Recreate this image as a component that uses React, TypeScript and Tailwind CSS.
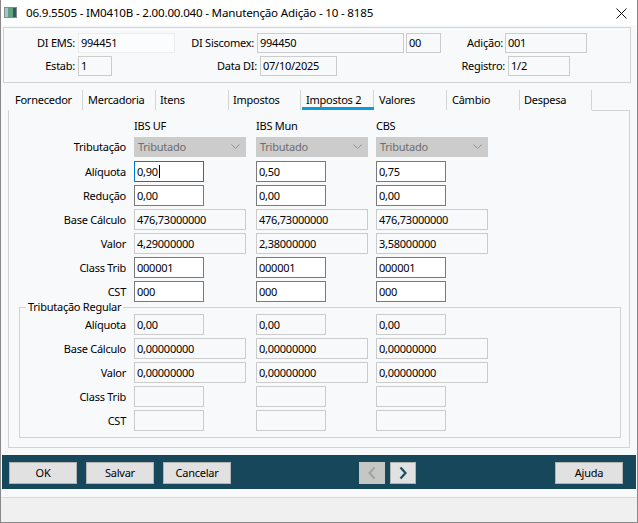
import React from 'react';

type Kind = 'edit' | 'focus' | 'ro';

const TABS = [
  { label: 'Fornecedor', w: 'w-[74px]', pl: 'pl-[6px]' },
  { label: 'Mercadoria', w: 'w-[73px]', pl: 'pl-[5px]' },
  { label: 'Itens', w: 'w-[73px]', pl: 'pl-[4px]' },
  { label: 'Impostos', w: 'w-[72px]', pl: 'pl-[4px]' },
  { label: 'Impostos 2', w: 'w-[73px]', pl: 'pl-[5px]', active: true },
  { label: 'Valores', w: 'w-[73px]', pl: 'pl-[5px]' },
  { label: 'Câmbio', w: 'w-[73px]', pl: 'pl-[5px]' },
  { label: 'Despesa', w: 'w-[72px]', pl: 'pl-[4px]' },
];

const TOP_ROWS: { label: string; kind: Kind; wide: boolean; values: string[] }[] = [
  { label: 'Alíquota', kind: 'edit', wide: false, values: ['0,90', '0,50', '0,75'] },
  { label: 'Redução', kind: 'edit', wide: false, values: ['0,00', '0,00', '0,00'] },
  { label: 'Base Cálculo', kind: 'ro', wide: true, values: ['476,73000000', '476,73000000', '476,73000000'] },
  { label: 'Valor', kind: 'ro', wide: true, values: ['4,29000000', '2,38000000', '3,58000000'] },
  { label: 'Class Trib', kind: 'edit', wide: false, values: ['000001', '000001', '000001'] },
  { label: 'CST', kind: 'edit', wide: false, values: ['000', '000', '000'] },
];

const REG_ROWS: { label: string; wide: boolean; values: string[] }[] = [
  { label: 'Alíquota', wide: false, values: ['0,00', '0,00', '0,00'] },
  { label: 'Base Cálculo', wide: true, values: ['0,00000000', '0,00000000', '0,00000000'] },
  { label: 'Valor', wide: true, values: ['0,00000000', '0,00000000', '0,00000000'] },
  { label: 'Class Trib', wide: false, values: ['', '', ''] },
  { label: 'CST', wide: false, values: ['', '', ''] },
];

const SLOTS = ['w-[122px]', 'w-[120px]', 'w-[120px]'];

function Box({ value, kind, wide, caret }: { value: string; kind: Kind; wide: boolean; caret?: boolean }) {
  const look =
    kind === 'edit' ? 'border-[#7a7a7a] bg-white' : kind === 'focus' ? 'border-[#0078d7] bg-white' : 'border-[#cccccc]';
  return (
    <div className={`flex h-[21px] shrink-0 items-center border pl-[2px] ${look} ${wide ? 'w-[112px]' : 'w-[70px]'}`}>
      <span className="leading-[16px]">{value}</span>
      {caret && <span className="ml-[1px] h-[13px] w-px bg-black" />}
    </div>
  );
}

function HeadField({ w, value, faint }: { w: string; value: string; faint?: boolean }) {
  return (
    <div className={`flex h-[20px] shrink-0 items-center border pl-[2px] ${w} ${faint ? 'border-[#ececec] bg-[#fbfcfd]' : 'border-[#cccccc]'}`}>
      <span className="leading-[16px]">{value}</span>
    </div>
  );
}

function Chevron({ dir, color }: { dir: 'l' | 'r'; color: string }) {
  return (
    <svg width="10" height="14" viewBox="0 0 10 14" fill="none">
      <path d={dir === 'l' ? 'M7.5 1.5 L2.5 7 L7.5 12.5' : 'M2.5 1.5 L7.5 7 L2.5 12.5'} stroke={color} strokeWidth="2.2" />
    </svg>
  );
}

function Btn({ label, ml }: { label: string; ml: string }) {
  return (
    <div className={`flex h-[22px] w-[68px] items-center justify-center border border-[#b4b4b4] bg-[#e1e1e1] ${ml}`}>
      {label}
    </div>
  );
}

export default function App() {
  return (
    <div className="flex h-[523px] w-[638px] flex-col overflow-hidden border-x border-b border-[#888888] bg-[#f8f9fb] font-['Noto_Sans',sans-serif] text-[11px] leading-[16px] tracking-[-0.25px] text-black">
      {/* title bar */}
      <div className="flex h-[25px] shrink-0 items-center bg-white">
        <svg className="ml-[3px]" width="13" height="11" viewBox="0 0 13 11">
          <rect x="0.5" y="0.5" width="12" height="10" fill="#e8eef0" stroke="#8a8a8a" />
          <rect x="1" y="1" width="3" height="9" fill="#9ec7d6" />
          <rect x="4" y="1" width="5" height="9" fill="#5fa37a" />
          <rect x="9" y="1" width="3" height="9" fill="#2f5868" />
        </svg>
        <span className="ml-[9px] pt-[1px] text-[11.6px] tracking-[-0.2px]">06.9.5505 - IM0410B - 2.00.00.040 - Manutenção Adição - 10 - 8185</span>
        <svg className="ml-auto mr-[10px] mt-[1px]" width="11" height="11" viewBox="0 0 11 11">
          <path d="M0.5 0.5 L10.5 10.5 M10.5 0.5 L0.5 10.5" stroke="#111" strokeWidth="1" />
        </svg>
      </div>

      {/* header fields */}
      <div className="ml-[2px] mt-[2px] h-[56px] w-[628px] shrink-0 border border-[#d2d2d2] pt-[5px]">
        <div className="flex h-[20px] items-center">
          <span className="w-[71px] text-right">DI EMS:</span>
          <div className="ml-[3px]"><HeadField w="w-[97px]" value="994451" faint /></div>
          <span className="w-[79px] text-right">DI Siscomex:</span>
          <div className="ml-[3px]"><HeadField w="w-[147px]" value="994450" /></div>
          <div className="ml-[2px]"><HeadField w="w-[35px]" value="00" /></div>
          <span className="w-[62px] text-right">Adição:</span>
          <div className="ml-[2px]"><HeadField w="w-[82px]" value="001" /></div>
        </div>
        <div className="mt-[3px] flex h-[20px] items-center">
          <span className="w-[71px] text-right">Estab:</span>
          <div className="ml-[3px]"><HeadField w="w-[34px]" value="1" /></div>
          <span className="w-[145px] text-right">Data DI:</span>
          <div className="ml-[3px]"><HeadField w="w-[77px]" value="07/10/2025" /></div>
          <span className="w-[168px] text-right">Registro:</span>
          <div className="ml-[3px]"><HeadField w="w-[62px]" value="1/2" /></div>
        </div>
      </div>

      {/* tabs */}
      <div className="ml-[8px] mt-[2px] flex h-[25px] shrink-0">
        {TABS.map((t) => (
          <div key={t.label} className={`relative flex h-[25px] ${t.w}`}>
            <span className={`flex-1 pt-[7px] ${t.pl}`}>{t.label}</span>
            <span className="mt-[5px] h-[20px] w-px bg-[#d4d4d4]" />
            {t.active && <span className="absolute bottom-[0px] left-[1px] h-[3px] w-[72px] bg-[#0a9bd9]" />}
          </div>
        ))}
      </div>

      {/* content panel */}
      <div className="ml-[7px] flex h-[338px] w-[622px] shrink-0 flex-col border-x border-b border-[#d2d2d2]">
        <div className="ml-auto h-px w-[37px] bg-[#d2d2d2]" />
        <div className="flex h-[26px] pt-[7px]">
          <span className="w-[125px]" />
          <span className="w-[122px]">IBS UF</span>
          <span className="w-[120px]">IBS Mun</span>
          <span className="w-[120px]">CBS</span>
        </div>

        {/* tributação selects */}
        <div className="flex h-[24px]">
          <div className="flex h-[20px] w-[117px] items-center justify-end">Tributação</div>
          <div className="ml-[8px] flex">
            {SLOTS.map((s) => (
              <div key={s} className={s + ' shrink-0'}>
                <div className="flex h-[20px] w-[112px] items-center justify-between border border-[#cccccc] bg-[#cccccc] pl-[3px] pr-[5px] text-[#6d6d6d]">
                  <span>Tributado</span>
                  <svg width="9" height="6" viewBox="0 0 9 6">
                    <path d="M0.5 0.5 L4.5 4.5 L8.5 0.5" stroke="#909090" fill="none" strokeWidth="1" />
                  </svg>
                </div>
              </div>
            ))}
          </div>
        </div>

        {TOP_ROWS.map((r, ri) => (
          <div key={r.label} className="flex h-[24px]">
            <div className="flex h-[21px] w-[117px] items-center justify-end">{r.label}</div>
            <div className="ml-[8px] flex">
              {r.values.map((v, i) => (
                <div key={i} className={SLOTS[i] + ' shrink-0'}>
                  <Box value={v} kind={ri === 0 && i === 0 ? 'focus' : r.kind} wide={r.wide} caret={ri === 0 && i === 0} />
                </div>
              ))}
            </div>
          </div>
        ))}

        {/* tributação regular */}
        <div className="relative ml-[10px] mt-[2px] h-[131px] w-[602px] border border-[#d2d2d2] pt-[6px]">
          <span className="absolute left-[6px] top-[-9px] bg-[#f8f9fb] px-[2px]">Tributação Regular</span>
          {REG_ROWS.map((r) => (
            <div key={r.label} className="flex h-[24px]">
              <div className="flex h-[21px] w-[106px] items-center justify-end">{r.label}</div>
              <div className="ml-[8px] flex">
                {r.values.map((v, i) => (
                  <div key={i} className={SLOTS[i] + ' shrink-0'}>
                    <Box value={v} kind="ro" wide={r.wide} />
                  </div>
                ))}
              </div>
            </div>
          ))}
        </div>
      </div>

      {/* toolbar */}
      <div className="mx-[1px] mt-[7px] flex h-[34px] shrink-0 items-start bg-[#17475a] pt-[7px]">
        <Btn label="OK" ml="ml-[7px]" />
        <Btn label="Salvar" ml="ml-[9px]" />
        <Btn label="Cancelar" ml="ml-[9px]" />
        <div className="ml-[128px] flex h-[22px] w-[26px] items-center justify-center bg-[#c5c7c4]">
          <Chevron dir="l" color="#a3a69f" />
        </div>
        <div className="ml-[5px] flex h-[22px] w-[26px] items-center justify-center border border-[#b4b4b4] bg-[#e1e1e1]">
          <Chevron dir="r" color="#1d4e63" />
        </div>
        <Btn label="Ajuda" ml="ml-[139px]" />
      </div>
      <div className="h-[8px] shrink-0" />
      <div className="flex-1 border-t border-[#d9d9d9] bg-[#f0f0f0]" />
    </div>
  );
}
